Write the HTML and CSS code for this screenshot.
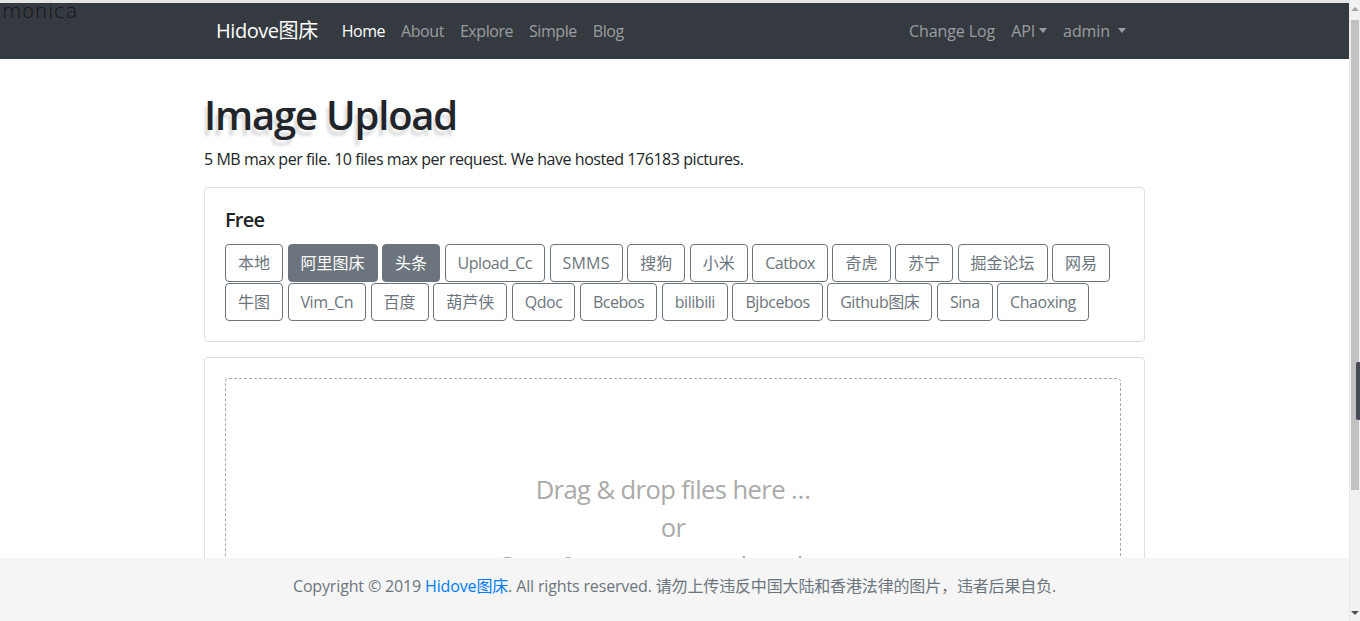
FILE: index.html
```html
<!DOCTYPE html>
<html lang="zh-CN">
<head>
<meta charset="utf-8">
<title>Hidove图床</title>
<link rel="stylesheet" href="styles.css">
</head>
<body>
<div class="screen">
  <div class="viewport">
    <div class="topstrip"></div>
    <nav class="navbar">
      <div class="container nav-inner">
        <a class="brand" href="#">Hidove图床</a>
        <ul class="nav nav-left">
          <li><a class="nav-link active" href="#">Home</a></li>
          <li><a class="nav-link" href="#">About</a></li>
          <li><a class="nav-link" href="#">Explore</a></li>
          <li><a class="nav-link" href="#">Simple</a></li>
          <li><a class="nav-link" href="#">Blog</a></li>
        </ul>
        <ul class="nav nav-right">
          <li><a class="nav-link" href="#">Change Log</a></li>
          <li><a class="nav-link" href="#">API<span class="caret"></span></a></li>
          <li><a class="nav-link" href="#">admin&nbsp;<span class="caret"></span></a></li>
        </ul>
      </div>
    </nav>

    <main class="container main">
      <h1 class="title">Image Upload</h1>
      <p class="lead-text">5 MB max per file. 10 files max per request. We have hosted 176183 pictures.</p>

      <section class="card">
        <h5 class="card-title">Free</h5>
        <div class="btn-group">
          <button class="btn zh">本地</button>
          <button class="btn zh active">阿里图床</button>
          <button class="btn zh active">头条</button>
          <button class="btn">Upload_Cc</button>
          <button class="btn wide">SMMS</button>
          <button class="btn zh">搜狗</button>
          <button class="btn zh">小米</button>
          <button class="btn">Catbox</button>
          <button class="btn zh">奇虎</button>
          <button class="btn zh">苏宁</button>
          <button class="btn zh">掘金论坛</button>
          <button class="btn zh">网易</button>
          <button class="btn zh">牛图</button>
          <button class="btn">Vim_Cn</button>
          <button class="btn zh">百度</button>
          <button class="btn zh">葫芦侠</button>
          <button class="btn">Qdoc</button>
          <button class="btn">Bcebos</button>
          <button class="btn">bilibili</button>
          <button class="btn">Bjbcebos</button>
          <button class="btn">Github图床</button>
          <button class="btn">Sina</button>
          <button class="btn">Chaoxing</button>
        </div>
      </section>

      <section class="card upload-card">
        <div class="drop-zone">
          <div class="drop-title">Drag &amp; drop files here …<br>or<br>Copy &amp; paste screenshots here</div>
        </div>
      </section>
    </main>

    <footer class="footer">
      Copyright © 2019 <a href="#">Hidove图床</a>. All rights reserved. 请勿上传违反中国大陆和香港法律的图片，违者后果自负.
    </footer>
  </div>

  <div class="scrollbar">
    <div class="sb-arrow sb-up"></div>
    <div class="sb-track">
      <div class="sb-thumb"></div>
    </div>
    <div class="sb-arrow sb-down"></div>
  </div>
</div>

<div class="monica">monica</div>
<div class="side-tab"></div>
</body>
</html>
```

FILE: styles.css
```css
* { box-sizing: border-box; }

html, body {
  margin: 0;
  padding: 0;
  height: 621px;
  overflow: hidden;
}

body {
  font-family: "Open Sans", "Noto Sans CJK SC", sans-serif;
  font-size: 16px;
  line-height: 1.5;
  letter-spacing: -0.45px;
  color: #212529;
  background: #fff;
}

.screen {
  display: flex;
  height: 621px;
}

.viewport {
  position: relative;
  flex: 1;
  overflow: hidden;
}

.topstrip {
  height: 3px;
  background: #e4e4e4;
}

.container {
  width: 941px;
  margin: 0 auto;
}

/* navbar */
.navbar {
  background: #343a40;
  height: 56px;
}

.nav-inner {
  display: flex;
  align-items: center;
  height: 56px;
  padding: 0 11px 0 12px;
}

.brand {
  font-size: 20px;
  color: #fff;
  text-decoration: none;
  margin-right: 16px;
  line-height: 30px;
}

.nav {
  display: flex;
  list-style: none;
  margin: 0;
  padding: 0;
}

.nav-right {
  margin-left: auto;
  letter-spacing: -0.1px;
}

.nav-link {
  display: block;
  padding: 8px;
  color: rgba(255, 255, 255, 0.5);
  text-decoration: none;
}

.nav-link.active { color: #fff; }

.caret {
  display: inline-block;
  margin-left: 4px;
  vertical-align: 4px;
  border-top: 5px solid;
  border-left: 4.5px solid transparent;
  border-right: 4.5px solid transparent;
}

/* main */
.main {
  padding-top: 32px;
}

.title {
  margin: 0 0 8px;
  font-size: 40px;
  font-weight: 600;
  letter-spacing: -1.2px;
  line-height: 48px;
  text-shadow: -3px 6px 3px rgba(0, 0, 0, 0.13);
}

.lead-text {
  margin: 0 0 16px;
}

.card {
  border: 1px solid #dfdfdf;
  border-radius: 4px;
  padding: 20px;
  margin-bottom: 15px;
}

.card-title {
  margin: 0 0 12px;
  font-size: 20px;
  font-weight: 600;
  letter-spacing: -0.8px;
  line-height: 24px;
}

.btn-group {
  display: flex;
  flex-wrap: wrap;
  column-gap: 4.5px;
  row-gap: 1px;
}

.btn {
  font-family: inherit;
  font-size: 16px;
  letter-spacing: inherit;
  line-height: 24px;
  padding: 6px 12px;
  color: #6c757d;
  background: transparent;
  border: 1px solid #6c757d;
  border-radius: 4px;
}

.btn.zh { letter-spacing: 0; }
.btn.wide { letter-spacing: 0.2px; }

.btn.active {
  color: #fff;
  background: #6c757d;
}

.upload-card { height: 400px; }

.drop-zone {
  border: 1px dashed #aaa;
  border-radius: 4px;
  margin-right: 3px;
  height: 100%;
}

.drop-title {
  padding: 92px 10px;
  text-align: center;
  font-size: 25.6px;
  letter-spacing: -0.6px;
  line-height: 38px;
  color: #aaa;
}

/* footer overlays the page bottom */
.footer {
  position: absolute;
  left: 0;
  right: 0;
  bottom: 0;
  height: 63px;
  background: #f5f5f5;
  color: #6c757d;
  text-align: center;
  line-height: 56px;
  letter-spacing: -0.15px;
}

.footer a {
  color: #007bff;
  text-decoration: none;
}

/* scrollbar */
.scrollbar {
  width: 11px;
  background: #f1f1f1;
  display: flex;
  flex-direction: column;
  border-left: 1px solid #e8e8e8;
}

.sb-arrow {
  height: 17px;
  display: flex;
  align-items: center;
  justify-content: center;
}

.sb-up::before {
  content: "";
  border-bottom: 4px solid #a3a3a3;
  border-left: 4px solid transparent;
  border-right: 4px solid transparent;
}

.sb-down::before {
  content: "";
  border-top: 4px solid #505050;
  border-left: 4px solid transparent;
  border-right: 4px solid transparent;
}

.sb-track {
  flex: 1;
  padding: 3px 1px 0;
}

.sb-thumb {
  height: 470px;
  background: #c1c1c1;
}

/* overlays from browser extension */
.monica {
  position: absolute;
  left: 2px;
  top: -4px;
  font-family: "DejaVu Sans", sans-serif;
  font-size: 20px;
  font-weight: 300;
  color: #111;
  letter-spacing: 0.5px;
}

.side-tab {
  position: absolute;
  right: 0;
  top: 362px;
  width: 4px;
  height: 58px;
  background: #474b55;
  border-radius: 2px 0 0 2px;
}
```
